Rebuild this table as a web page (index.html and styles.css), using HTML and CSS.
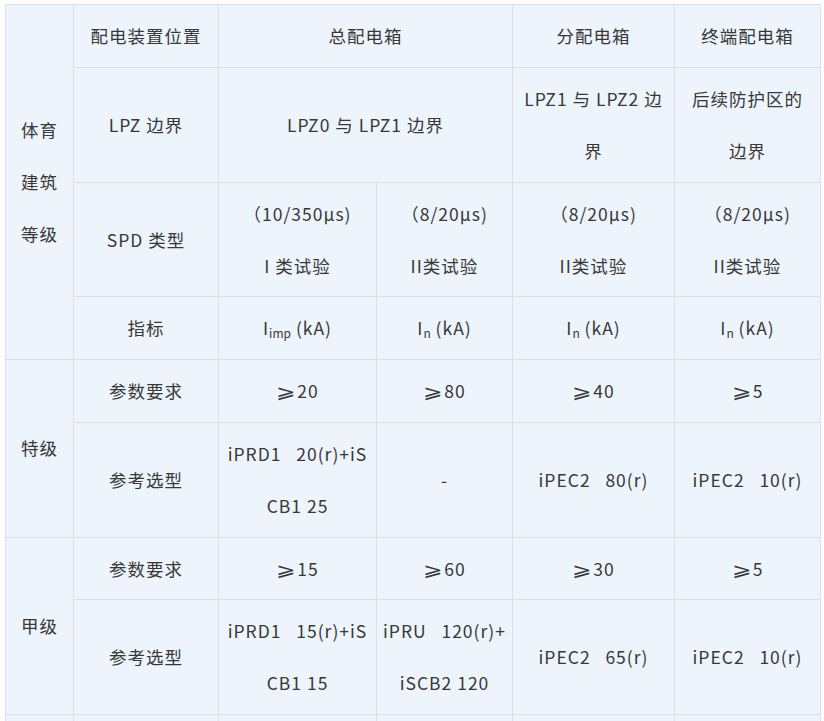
FILE: index.html
```html
<!DOCTYPE html>
<html lang="zh-CN">
<head>
<meta charset="utf-8">
<link rel="stylesheet" href="styles.css">
</head>
<body>
<div class="wrap">
<table class="spd">
  <colgroup>
    <col class="c1"><col class="c2"><col class="c3"><col class="c4"><col class="c5"><col class="c6">
  </colgroup>
  <tbody>
    <tr>
      <td rowspan="4" class="grade">体育<br>建筑<br>等级</td>
      <td>配电装置位置</td>
      <td colspan="2">总配电箱</td>
      <td>分配电箱</td>
      <td>终端配电箱</td>
    </tr>
    <tr>
      <td>LPZ 边界</td>
      <td colspan="2">LPZ0 与 LPZ1 边界</td>
      <td>LPZ1 与 LPZ2 边<br>界</td>
      <td>后续防护区的<br>边界</td>
    </tr>
    <tr>
      <td>SPD 类型</td>
      <td>（10/350μs)<br>I 类试验</td>
      <td>（8/20μs)<br>II类试验</td>
      <td>（8/20μs)<br>II类试验</td>
      <td>（8/20μs)<br>II类试验</td>
    </tr>
    <tr>
      <td>指标</td>
      <td>I<sub>imp</sub> (kA)</td>
      <td>I<sub>n</sub> (kA)</td>
      <td>I<sub>n</sub> (kA)</td>
      <td>I<sub>n</sub> (kA)</td>
    </tr>
    <tr>
      <td rowspan="2">特级</td>
      <td>参数要求</td>
      <td><span class="ge">⩾</span>20</td>
      <td><span class="ge">⩾</span>80</td>
      <td><span class="ge">⩾</span>40</td>
      <td><span class="ge">⩾</span>5</td>
    </tr>
    <tr>
      <td>参考选型</td>
      <td>iPRD1&nbsp;&nbsp;&nbsp;20(r)+iS<br>CB1 25</td>
      <td>-</td>
      <td>iPEC2&nbsp;&nbsp;&nbsp;80(r)</td>
      <td>iPEC2&nbsp;&nbsp;&nbsp;10(r)</td>
    </tr>
    <tr>
      <td rowspan="2">甲级</td>
      <td>参数要求</td>
      <td><span class="ge">⩾</span>15</td>
      <td><span class="ge">⩾</span>60</td>
      <td><span class="ge">⩾</span>30</td>
      <td><span class="ge">⩾</span>5</td>
    </tr>
    <tr>
      <td>参考选型</td>
      <td>iPRD1&nbsp;&nbsp;&nbsp;15(r)+iS<br>CB1 15</td>
      <td>iPRU&nbsp;&nbsp;&nbsp;120(r)+<br>iSCB2 120</td>
      <td>iPEC2&nbsp;&nbsp;&nbsp;65(r)</td>
      <td>iPEC2&nbsp;&nbsp;&nbsp;10(r)</td>
    </tr>
    <tr class="next">
      <td></td>
      <td></td>
      <td></td>
      <td></td>
      <td></td>
      <td></td>
    </tr>
  </tbody>
</table>
</div>
</body>
</html>
```

FILE: styles.css
```css
html, body {
  margin: 0;
  padding: 0;
  background: #ffffff;
}

.wrap {
  padding: 4px 0 0 5px;
}

.spd {
  border-collapse: collapse;
  table-layout: fixed;
  width: 816px;
  background: #edf4fb;
  font-family: "Noto Sans CJK SC", "Noto Sans", sans-serif;
  font-size: 17.5px;
  letter-spacing: 1px;
  color: #383838;
}

.c1 { width: 68px; }
.c2 { width: 145px; }
.c3 { width: 158px; }
.c4 { width: 136px; }
.c5 { width: 162px; }
.c6 { width: 146px; }

.spd td {
  border: 1px solid #dcdfe3;
  padding: 5px 2px 4.75px;
  line-height: 52px;
  text-align: center;
  vertical-align: middle;
  white-space: nowrap;
}

.spd .next td {
  height: 52px;
}

.spd sub {
  font-size: 12px;
  line-height: 0;
  vertical-align: -3px;
  letter-spacing: 0;
}

.ge {
  display: inline-block;
  transform: scaleX(1.3);
  margin: 0 3px 0 2px;
}
```
